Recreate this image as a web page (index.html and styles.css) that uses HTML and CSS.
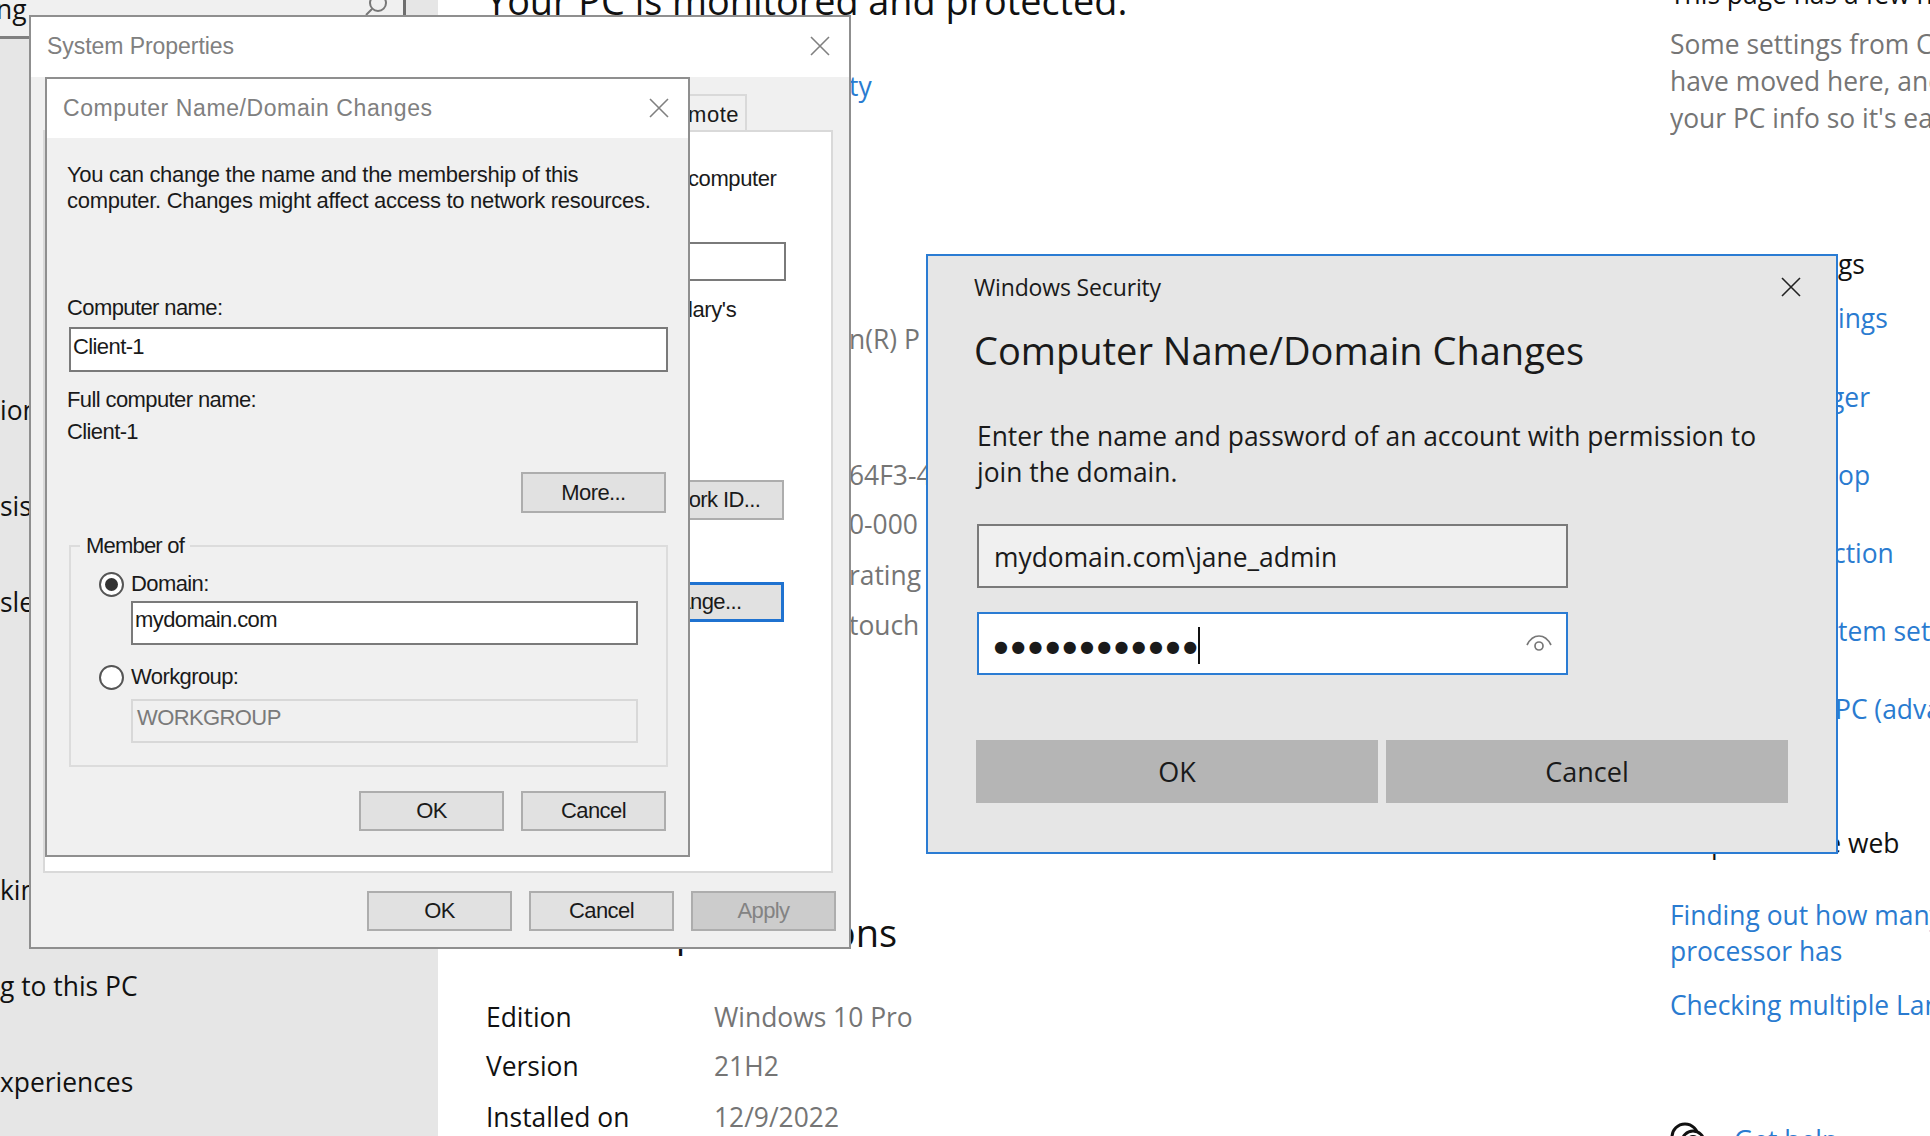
FILE: index.html
```html
<!DOCTYPE html>
<html>
<head>
  <title>Computer Name/Domain Changes</title>
  <link rel="stylesheet" href="styles.css">
</head>
<body>
  <div class="page">
    <!-- settings app behind the windows -->
    <div class="sidebar">
      <div class="search">
        <span class="search-text">ng</span>
        <svg class="search-icon" viewBox="0 0 24 16"><circle cx="13" cy="3" r="8"/><path d="M7 9 1 15"/></svg>
      </div>
      <div class="nav-item nav-first">ion</div>
      <div class="nav-item">sist</div>
      <div class="nav-item">sle</div>
      <div class="nav-item nav-after-gap">kin</div>
      <div class="nav-item">g to this PC</div>
      <div class="nav-item">xperiences</div>
    </div>

    <div class="about">
      <h1 class="about-title">Your PC is monitored and protected.</h1>
      <div class="row peek link gap-45">ty</div>
      <div class="row peek muted gap-217">n(R) P</div>
      <div class="row peek muted gap-100">64F3-4</div>
      <div class="row peek muted gap-13">0-000</div>
      <div class="row peek muted gap-15">rating</div>
      <div class="row peek muted gap-14">touch</div>
      <h2 class="about-heading">Windows specifications</h2>
      <div class="row spec gap-45"><span>Edition</span><span class="muted">Windows 10 Pro</span></div>
      <div class="row spec gap-13"><span>Version</span><span class="muted">21H2</span></div>
      <div class="row spec gap-15"><span>Installed on</span><span class="muted">12/9/2022</span></div>
    </div>

    <div class="aside">
      <div class="row first-line">This page has a few new settings</div>
      <div class="aside-note muted">
        <div>Some settings from Control Panel</div>
        <div>have moved here, and we've tidied</div>
        <div>your PC info so it's easier to share.</div>
      </div>
      <div class="row peek-aside gap-109">gs</div>
      <div class="row peek-aside link gap-18">ings</div>
      <div class="row peek-aside peek-ger link gap-43">ger</div>
      <div class="row peek-aside link gap-42">op</div>
      <div class="row peek-aside peek-ction link gap-42">ction</div>
      <div class="row peek-aside link gap-42">tem settings</div>
      <div class="row peek-aside peek-pc link gap-42">PC (advanced)</div>
      <div class="row gap-98">Help from the web</div>
      <div class="row link gap-36">Finding out how many cores my</div>
      <div class="row link">processor has</div>
      <div class="row link gap-18">Checking multiple Languages</div>
      <div class="help">
        <svg class="help-icon" viewBox="0 0 36 20"><circle cx="15" cy="15" r="13"/><circle cx="23" cy="20" r="11"/><circle class="help-dot" cx="23" cy="20" r="7"/></svg>
        <span class="link">Get help</span>
      </div>
    </div>
  </div>

  <!-- System Properties -->
  <div class="win sys">
    <div class="titlebar">
      <span>System Properties</span>
      <svg class="close" viewBox="0 0 20 20"><path d="M1 1 19 19M19 1 1 19"/></svg>
    </div>
    <div class="sys-body">
      <div class="tab-strip"><div class="tab">Remote</div></div>
      <div class="tab-panel">
        <div class="panel-text panel-computer">computer</div>
        <div class="panel-field"></div>
        <div class="panel-text panel-lary">lary's</div>
        <button class="btn panel-btn panel-network">Network ID...</button>
        <button class="btn panel-btn panel-change">Change...</button>
      </div>
      <div class="btn-row sys-buttons">
        <button class="btn">OK</button>
        <button class="btn">Cancel</button>
        <button class="btn btn-disabled">Apply</button>
      </div>
    </div>
  </div>

  <!-- Computer Name/Domain Changes, classic dialog -->
  <div class="win name-dlg">
    <div class="titlebar">
      <span>Computer Name/Domain Changes</span>
      <svg class="close" viewBox="0 0 20 20"><path d="M1 1 19 19M19 1 1 19"/></svg>
    </div>
    <div class="name-body">
      <p class="intro">You can change the name and the membership of this<br>computer. Changes might affect access to network resources.</p>
      <div class="field-label">Computer name:</div>
      <div class="field field-name">Client-1</div>
      <div class="full-label">Full computer name:</div>
      <div class="full-value">Client-1</div>
      <button class="btn more-btn">More...</button>
      <div class="group">
        <span class="legend">Member of</span>
        <div class="radio-row radio-domain"><span class="radio radio-on"></span>Domain:</div>
        <div class="field field-group">mydomain.com</div>
        <div class="radio-row radio-work"><span class="radio"></span>Workgroup:</div>
        <div class="field field-group field-disabled">WORKGROUP</div>
      </div>
      <div class="btn-row name-buttons">
        <button class="btn">OK</button>
        <button class="btn">Cancel</button>
      </div>
    </div>
  </div>

  <!-- Windows Security credential prompt -->
  <div class="sec-dlg">
    <div class="sec-top">
      <span>Windows Security</span>
      <svg class="close" viewBox="0 0 20 20"><path d="M1 1 19 19M19 1 1 19"/></svg>
    </div>
    <h2 class="sec-heading">Computer Name/Domain Changes</h2>
    <p class="sec-text">Enter the name and password of an account with permission to<br>join the domain.</p>
    <div class="sec-input sec-input-user">mydomain.com\jane_admin</div>
    <div class="sec-input sec-input-active">
      <span class="dots">●●●●●●●●●●●●</span><span class="caret"></span>
      <svg class="eye" viewBox="0 0 26 18"><path d="M1 11C7 -1 19 -1 25 11"/><circle cx="13" cy="12" r="4"/></svg>
    </div>
    <div class="sec-buttons">
      <button class="sec-btn">OK</button>
      <button class="sec-btn">Cancel</button>
    </div>
  </div>
</body>
</html>
```

FILE: styles.css
```css
body {
  margin: 0;
  width: 1930px;
  height: 1136px;
  overflow: hidden;
  position: relative;
  background: #fff;
  font-family: "Open Sans", sans-serif;
  font-size: 26.4px;
  color: #111;
}

button {
  font-family: inherit;
  padding: 0;
  white-space: nowrap;
}

.page {
  display: grid;
  grid-template-columns: 438px 1232px 260px;
  height: 1136px;
  overflow: hidden;
}

/* background app */
.sidebar {
  background: #e6e6e6;
  overflow: hidden;
}

.search {
  display: flex;
  justify-content: space-between;
  width: 389px;
  height: 36px;
  background: #f0f0f0;
  border-bottom: 3px solid #808080;
  border-right: 3px solid #6e6e6e;
  padding-right: 14px;
}

.search-text {
  margin: -6px 0 0 -4px;
  line-height: 30px;
}

.search-icon {
  width: 24px;
  height: 16px;
  fill: none;
  stroke: #777;
  stroke-width: 2;
}

.nav-item {
  height: 96px;
  line-height: 96px;
  white-space: nowrap;
}

.nav-first {
  margin-top: 323px;
}

.nav-after-gap {
  margin-top: 192px;
}

.about {
  padding-left: 48px;
  overflow: hidden;
}

.about-title {
  margin: -21px 0 0;
  height: 44px;
  line-height: 44px;
  font-size: 37.8px;
  font-weight: 400;
  white-space: nowrap;
}

.about-heading {
  margin: 267px 0 0;
  height: 44px;
  line-height: 44px;
  font-size: 38px;
  font-weight: 400;
  white-space: nowrap;
}

.row {
  height: 36px;
  line-height: 36px;
  white-space: nowrap;
}

.peek {
  padding-left: 363px;
}

.peek-aside {
  padding-left: 168px;
}

.peek-ger {
  padding-left: 160px;
}

.peek-ction {
  padding-left: 163px;
}

.peek-pc {
  padding-left: 165px;
}

.spec {
  display: grid;
  grid-template-columns: 228px 1fr;
}

.link {
  color: #2a7bd0;
}

.muted {
  color: #757575;
}

.gap-13 { margin-top: 13px; }
.gap-14 { margin-top: 14px; }
.gap-15 { margin-top: 15px; }
.gap-18 { margin-top: 18px; }
.gap-36 { margin-top: 36px; }
.gap-42 { margin-top: 42px; }
.gap-43 { margin-top: 43px; }
.gap-45 { margin-top: 45px; }
.gap-98 { margin-top: 98px; }
.gap-100 { margin-top: 100px; }
.gap-109 { margin-top: 109px; }
.gap-217 { margin-top: 217px; }

.aside {
  overflow: hidden;
}

.first-line {
  margin-top: -24px;
}

.aside-note {
  margin-top: 14px;
  line-height: 37px;
  white-space: nowrap;
}

.help {
  display: flex;
  gap: 28px;
  margin-top: 99px;
  height: 20px;
  line-height: 36px;
}

.help-icon {
  width: 36px;
  height: 20px;
  fill: #fff;
  stroke: #111;
  stroke-width: 3;
}

.help-dot {
  fill: #111;
  stroke: none;
}

/* classic windows */
.win {
  position: absolute;
  box-sizing: border-box;
  background: #f0f0f0;
  border: 2px solid #8f8f8f;
  font-family: "Liberation Sans", sans-serif;
  font-size: 22px;
  letter-spacing: -0.6px;
  color: #1a1a1a;
}

.sys {
  left: 29px;
  top: 15px;
  width: 822px;
  height: 934px;
}

.name-dlg {
  left: 45px;
  top: 77px;
  width: 645px;
  height: 780px;
}

.titlebar {
  box-sizing: border-box;
  display: flex;
  justify-content: space-between;
  align-items: center;
  background: #fff;
  color: #808080;
  font-size: 23px;
  letter-spacing: -0.05px;
  padding: 0 19px 2px 16px;
  height: 60px;
}

.name-dlg .titlebar {
  height: 59px;
  padding: 0 19px 1px 16px;
  letter-spacing: 0.6px;
}

.close {
  width: 20px;
  height: 20px;
  fill: none;
  stroke: #808080;
  stroke-width: 1.6;
}

.btn {
  box-sizing: border-box;
  width: 145px;
  height: 40px;
  background: #e1e1e1;
  border: 2px solid #adadad;
  font-size: 22px;
  letter-spacing: -0.6px;
  color: #1a1a1a;
}

.btn-disabled {
  background: #cccccc;
  color: #838383;
}

.btn-row {
  display: flex;
  justify-content: flex-end;
  gap: 17px;
}

.sys-body {
  padding: 17px 16px 0 12px;
}

.tab-strip {
  display: flex;
  justify-content: flex-end;
  padding-right: 86px;
}

.tab {
  box-sizing: border-box;
  width: 200px;
  height: 36px;
  line-height: 38px;
  text-align: right;
  padding-right: 6px;
  letter-spacing: 0.5px;
  border: 2px solid #d9d9d9;
  border-bottom: none;
}

.tab-panel {
  box-sizing: border-box;
  display: flex;
  flex-direction: column;
  height: 743px;
  padding-left: 643px;
  background: #fff;
  border: 2px solid #d9d9d9;
}

.panel-text {
  height: 26px;
  line-height: 26px;
  letter-spacing: -0.4px;
}

.panel-computer {
  margin-top: 34px;
}

.panel-field {
  box-sizing: border-box;
  align-self: flex-end;
  width: 146px;
  height: 39px;
  margin: 50px 45px 0 0;
  background: #fff;
  border: 2px solid #7a7a7a;
}

.panel-lary {
  margin-top: 16px;
}

.panel-btn {
  flex-shrink: 0;
  align-self: flex-end;
  margin-right: 47px;
  padding-right: 30px;
}

.panel-network {
  margin-top: 157px;
}

.panel-change {
  margin-top: 62px;
  border: 3px solid #1f72d0;
}

.sys-buttons {
  margin: 18px -3px 0 0;
}

.name-body {
  display: flex;
  flex-direction: column;
  padding: 0 20px 0 20px;
}

.intro {
  margin: 24px 0 0;
  line-height: 26px;
  letter-spacing: -0.3px;
  white-space: nowrap;
}

.field-label,
.full-label,
.full-value {
  height: 26px;
  line-height: 26px;
}

.field-label {
  margin-top: 81px;
}

.field {
  box-sizing: border-box;
  background: #fff;
  border: 2px solid #7a7a7a;
  padding-left: 2px;
}

.field-name {
  margin: 6px 0 0 2px;
  height: 45px;
  line-height: 36px;
}

.full-label {
  margin-top: 15px;
}

.full-value {
  margin-top: 6px;
}

.more-btn {
  align-self: flex-end;
  height: 41px;
  margin: 27px 2px 0 0;
}

.group {
  position: relative;
  box-sizing: border-box;
  height: 222px;
  margin: 32px 0 0 2px;
  border: 2px solid #dcdcdc;
}

.legend {
  position: absolute;
  left: 9px;
  top: -14px;
  padding: 0 6px;
  line-height: 26px;
  letter-spacing: -0.8px;
  background: #f0f0f0;
}

.radio-row {
  display: flex;
  align-items: center;
  gap: 7px;
  height: 26px;
  padding-left: 28px;
}

.radio-domain {
  margin-top: 24px;
}

.radio-work {
  margin-top: 19px;
}

.radio {
  box-sizing: border-box;
  display: flex;
  align-items: center;
  justify-content: center;
  width: 25px;
  height: 25px;
  background: #fff;
  border: 2px solid #555;
  border-radius: 50%;
}

.radio-on::after {
  content: "";
  width: 13px;
  height: 13px;
  background: #333;
  border-radius: 50%;
}

.field-group {
  width: 507px;
  height: 44px;
  margin: 4px 0 0 60px;
  line-height: 34px;
}

.field-disabled {
  margin-top: 9px;
  background: #f0f0f0;
  border-color: #d8d8d8;
  color: #7a7a7a;
  padding-left: 4px;
}

.name-buttons {
  margin: 24px 2px 0 0;
}

/* credential prompt */
.sec-dlg {
  position: absolute;
  left: 926px;
  top: 254px;
  width: 912px;
  height: 600px;
  box-sizing: border-box;
  background: #e6e6e6;
  border: 2px solid #2b7cd3;
  padding-left: 46px;
  color: #1a1a1a;
  overflow: hidden;
}

.sec-top {
  display: flex;
  justify-content: space-between;
  align-items: center;
  height: 32px;
  margin-top: 15px;
  padding-right: 35px;
  font-size: 23px;
  letter-spacing: -0.15px;
}

.sec-top .close {
  stroke: #222;
}

.sec-heading {
  margin: 23px 0 0;
  height: 48px;
  line-height: 48px;
  font-size: 38px;
  font-weight: 400;
  white-space: nowrap;
}

.sec-text {
  margin: 44px 0 0 3px;
  line-height: 36px;
  white-space: nowrap;
}

.sec-input {
  box-sizing: border-box;
  display: flex;
  align-items: center;
  width: 591px;
  height: 64px;
  margin: 34px 0 0 3px;
  padding-left: 15px;
  background: #f0f0f0;
  border: 2px solid #7a7a7a;
}

.sec-input-user {
  padding-top: 2px;
}

.sec-input-active {
  position: relative;
  height: 63px;
  margin-top: 24px;
  background: #fff;
  border-color: #2b7cd3;
}

.dots {
  font-family: "DejaVu Sans", sans-serif;
  font-size: 16px;
  letter-spacing: 3.25px;
  margin: 6px -3px 0 0;
}

.caret {
  width: 2px;
  height: 37px;
  margin-top: 4px;
  background: #111;
}

.eye {
  position: absolute;
  right: 14px;
  top: 20px;
  width: 26px;
  height: 18px;
  fill: none;
  stroke: #777;
  stroke-width: 1.7;
}

.sec-buttons {
  display: flex;
  gap: 8px;
  margin: 65px 0 0 2px;
}

.sec-btn {
  width: 402px;
  height: 63px;
  background: #b5b5b5;
  border: none;
  font-size: 27px;
  color: #1a1a1a;
}
```
